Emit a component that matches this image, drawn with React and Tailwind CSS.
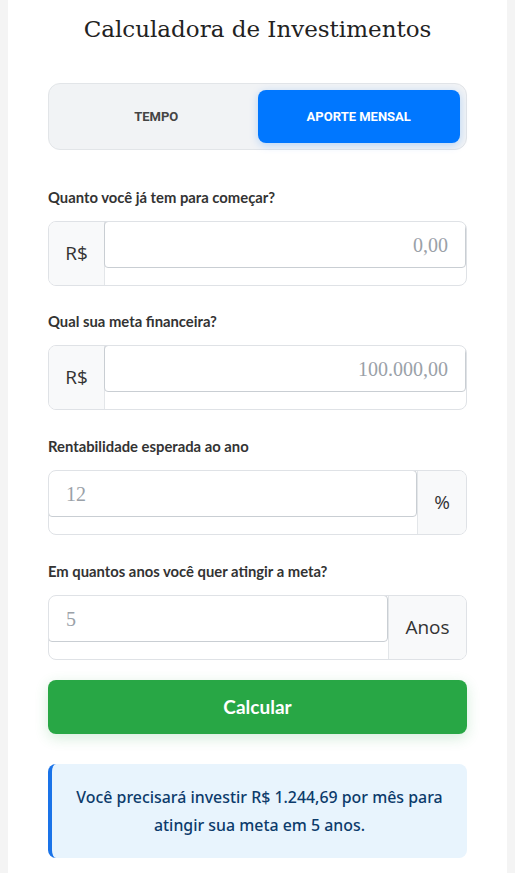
import React from "react";

function Field({ label, prefix, suffix, value, align = "left", addonW, mb = "mb-[26px]" }) {
  return (
    <div className={mb}>
      <div className="h-[20px] leading-[20px] mb-[14px] text-[14.8px] font-bold text-[#333333] font-['Lato',sans-serif]">
        {label}
      </div>
      <div className="flex h-[65px] border border-[#dfe2e6] rounded-[8px] overflow-hidden bg-white">
        {prefix && (
          <div
            className={`flex items-center justify-center bg-[#f8f9fa] border-r border-[#e3e6e9] text-[19px] font-medium text-[#333] font-['Open_Sans',sans-serif] ${addonW}`}
          >
            {prefix}
          </div>
        )}
        <div className="flex-1 flex flex-col">
          <div
            className={`h-[47px] border border-[#c9ced3] rounded-[4px] flex items-center px-[17px] text-[20px] text-[#9aa1a8] font-['Liberation_Serif',serif] -ml-px -mt-px ${
              align === "right" ? "justify-end" : "justify-start"
            }`}
          >
            {value}
          </div>
        </div>
        {suffix && (
          <div
            className={`flex items-center justify-center bg-[#f8f9fa] border-l border-[#e3e6e9] text-[19px] font-medium text-[#333] font-['Open_Sans',sans-serif] ${addonW}`}
          >
            {suffix}
          </div>
        )}
      </div>
    </div>
  );
}

export default function App() {
  return (
    <div className="min-h-[873px] bg-[#f4f4f4] flex justify-center">
      <div className="w-[499px] bg-white px-[40px] pt-[14px] min-h-[873px]">
        <h1 className="text-center text-[23px] leading-[30px] text-[#222] font-['DejaVu_Serif',serif] mb-[39px]">
          Calculadora de Investimentos
        </h1>
        <div className="flex p-[6px] h-[67px] bg-[#f1f3f5] border border-[#e2e5e8] rounded-[12px] mb-[37px]">
          <div className="flex-1 flex items-center justify-center text-[13px] font-bold text-[#444] font-['Roboto',sans-serif]">
            TEMPO
          </div>
          <div className="flex-1 flex items-center justify-center rounded-[8px] bg-[#0077ff] text-[13px] font-bold text-white font-['Roboto',sans-serif] shadow-[0_2px_8px_rgba(0,119,255,0.25)]">
            APORTE MENSAL
          </div>
        </div>
        <Field label="Quanto você já tem para começar?" prefix="R$" value="0,00" align="right" addonW="w-[56px]" mb="mb-[25px]" />
        <Field label="Qual sua meta financeira?" prefix="R$" value="100.000,00" align="right" addonW="w-[56px]" />
        <Field label="Rentabilidade esperada ao ano" suffix="%" value="12" addonW="w-[49px]" />
        <Field label="Em quantos anos você quer atingir a meta?" suffix="Anos" value="5" addonW="w-[78px]" mb="mb-[20px]" />
        <button className="w-full h-[54px] rounded-[8px] bg-[#28a745] text-white text-[19px] font-bold font-['Lato',sans-serif] shadow-[0_4px_14px_rgba(40,167,69,0.2)] mb-[30px]">
          Calcular
        </button>
        <div className="h-[94px] rounded-[8px] bg-[#e8f4fd] border-l-[4px] border-[#1a73e8] flex items-center justify-center text-center px-[14px] text-[15.9px] leading-[28px] font-medium text-[#0c3b6b] font-['Noto_Sans',sans-serif]">
          Você precisará investir R$ 1.244,69 por mês para atingir sua meta em 5 anos.
        </div>
      </div>
    </div>
  );
}
